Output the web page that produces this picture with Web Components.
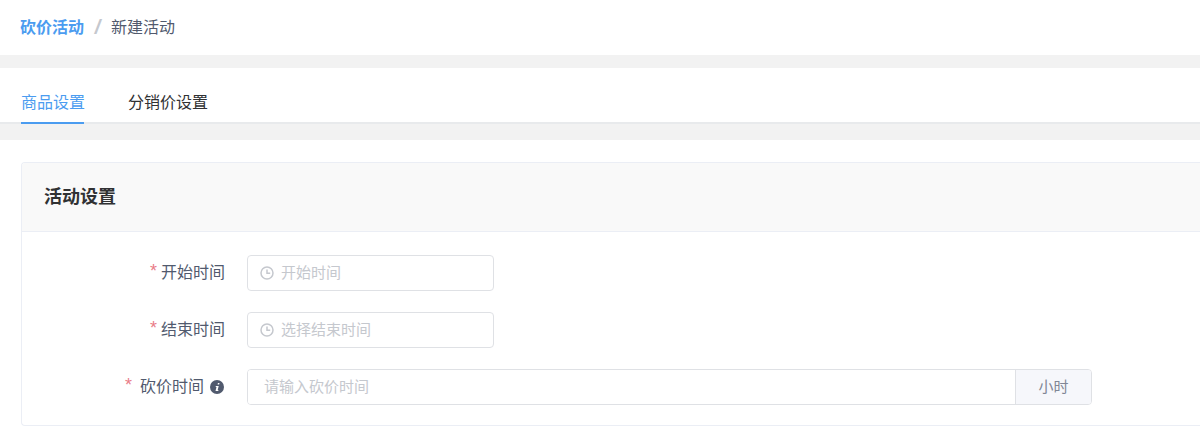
<!DOCTYPE html>
<html lang="zh">
<head>
<meta charset="utf-8">
<title>新建活动</title>
<style>
  html, body { margin: 0; height: 436px; overflow: hidden; background: #f2f2f2; }
  body { font-family: "Noto Sans CJK SC", "Liberation Sans", sans-serif; color: #515a6e; }
</style>
</head>
<body>
<page-breadcrumb parent="砍价活动" current="新建活动"></page-breadcrumb>
<page-tabs>
  <tab-item active>商品设置</tab-item>
  <tab-item>分销价设置</tab-item>
</page-tabs>
<main-panel>
  <form-card title="活动设置">
    <form-row label="开始时间" gap="4">
      <date-input placeholder="开始时间"></date-input>
    </form-row>
    <form-row label="结束时间" gap="4">
      <date-input placeholder="选择结束时间"></date-input>
    </form-row>
    <form-row label="砍价时间" gap="8" tip>
      <append-input placeholder="请输入砍价时间" unit="小时"></append-input>
    </form-row>
  </form-card>
</main-panel>

<script>
class PageBreadcrumb extends HTMLElement {
  connectedCallback() {
    this.attachShadow({ mode: 'open' }).innerHTML = `
      <style>
        :host { display: flex; align-items: center; height: 55px; box-sizing: border-box; padding: 0 0 3px 20px; background: #fff; font-size: 16px; }
        .parent { color: #4b9cf0; font-weight: 700; }
        .sep { width: 27px; text-align: center; color: #c5c8ce; font: italic 700 20px "Liberation Sans", sans-serif; margin-top: 2px; }
        .current { color: #515a6e; }
      </style>
      <span class="parent">${this.getAttribute('parent')}</span>
      <span class="sep">/</span>
      <span class="current">${this.getAttribute('current')}</span>`;
  }
}

class PageTabs extends HTMLElement {
  constructor() {
    super();
    this.attachShadow({ mode: 'open' }).innerHTML = `
      <style>
        :host { display: flex; gap: 44px; height: 54px; margin-top: 13px; padding-left: 21px; background: #fff; border-bottom: 2px solid #e8eaec; }
      </style>
      <slot></slot>`;
  }
}

class TabItem extends HTMLElement {
  constructor() {
    super();
    this.attachShadow({ mode: 'open' }).innerHTML = `
      <style>
        :host { display: block; height: 56px; box-sizing: border-box; padding-top: 21px; font-size: 16px; line-height: 24px; color: #303133; white-space: nowrap; }
        :host([active]) { width: 63px; color: #4b9cf0; border-bottom: 2px solid #4b9cf0; }
      </style>
      <slot></slot>`;
  }
}

class MainPanel extends HTMLElement {
  constructor() {
    super();
    this.attachShadow({ mode: 'open' }).innerHTML = `
      <style>
        :host { display: block; height: 296px; box-sizing: border-box; margin-top: 16px; padding: 22px 0 0 21px; background: #fff; }
      </style>
      <slot></slot>`;
  }
}

class FormCard extends HTMLElement {
  connectedCallback() {
    this.attachShadow({ mode: 'open' }).innerHTML = `
      <style>
        /* the card runs off the right of the window, so no right edge here */
        :host { display: block; height: 264px; box-sizing: border-box; border: 1px solid #ebeef5; border-right: none; border-radius: 4px 0 0 4px; overflow: hidden; }
        .head { height: 69px; box-sizing: border-box; padding: 0 0 5px 22px; display: flex; align-items: center; background: #f9f9f9; border-bottom: 1px solid #ebeef5; font-size: 18px; font-weight: 700; color: #303133; }
        .body { display: flex; flex-direction: column; gap: 21px; padding-top: 23px; }
      </style>
      <div class="head">${this.getAttribute('title')}</div>
      <div class="body"><slot></slot></div>`;
  }
}

class FormRow extends HTMLElement {
  connectedCallback() {
    const tip = this.hasAttribute('tip') ? `
      <svg width="14" height="14" viewBox="0 0 14 14" aria-hidden="true">
        <circle cx="7" cy="7" r="7" fill="#515a6e"/>
        <path d="M7.9 3.1h1.6l-.3 1.5H7.6z M5.9 6h2.8l-1 4h.8l-.3 1.1H5.5l1-4h-.9z" fill="#fff"/>
      </svg>` : '';
    this.attachShadow({ mode: 'open' }).innerHTML = `
      <style>
        :host { display: flex; align-items: center; height: 36px; }
        .label { width: 203px; height: 36px; padding-bottom: 4px; display: flex; justify-content: flex-end; align-items: center; font-size: 16px; color: #515a6e; box-sizing: border-box; position: relative; }
        .has-tip { padding-right: 21px; }
        .star { color: #e2505f; opacity: .75; font: 18px "Liberation Sans", sans-serif; margin-right: ${this.getAttribute('gap')}px; }
        svg { position: absolute; right: 1px; top: 11px; }
        .field { margin-left: 22px; }
      </style>
      <div class="label ${tip ? 'has-tip' : ''}"><span class="star">*</span><span>${this.getAttribute('label')}</span>${tip}</div>
      <div class="field"><slot></slot></div>`;
  }
}

class DateInput extends HTMLElement {
  connectedCallback() {
    this.attachShadow({ mode: 'open' }).innerHTML = `
      <style>
        :host { display: flex; align-items: center; gap: 7px; width: 247px; height: 36px; box-sizing: border-box; padding-left: 12px; border: 1px solid #dfe1e5; border-radius: 4px; background: #fff; }
        svg { flex: none; }
        span { font-size: 15px; color: #c5c8ce; margin-top: -4px; }
      </style>
      <svg width="14" height="14" viewBox="0 0 14 14" fill="none" stroke="#c5c8ce" stroke-width="1.5" aria-hidden="true">
        <circle cx="7" cy="7" r="6"/>
        <path d="M7 3.5V7.3H10.2"/>
      </svg>
      <span>${this.getAttribute('placeholder')}</span>`;
  }
}

class AppendInput extends HTMLElement {
  connectedCallback() {
    this.attachShadow({ mode: 'open' }).innerHTML = `
      <style>
        :host { display: flex; width: 845px; height: 36px; box-sizing: border-box; border: 1px solid #dfe1e5; border-radius: 4px; overflow: hidden; font-size: 15px; }
        .input { width: 768px; box-sizing: border-box; padding: 0 0 4px 16px; display: flex; align-items: center; color: #c5c8ce; background: #fff; border-right: 1px solid #dfe1e5; }
        .unit { flex: 1; padding-bottom: 4px; display: flex; align-items: center; justify-content: center; background: #f6f7fb; color: #808695; }
      </style>
      <div class="input">${this.getAttribute('placeholder')}</div>
      <div class="unit">${this.getAttribute('unit')}</div>`;
  }
}

customElements.define('page-breadcrumb', PageBreadcrumb);
customElements.define('page-tabs', PageTabs);
customElements.define('tab-item', TabItem);
customElements.define('main-panel', MainPanel);
customElements.define('form-card', FormCard);
customElements.define('form-row', FormRow);
customElements.define('date-input', DateInput);
customElements.define('append-input', AppendInput);
</script>
</body>
</html>
